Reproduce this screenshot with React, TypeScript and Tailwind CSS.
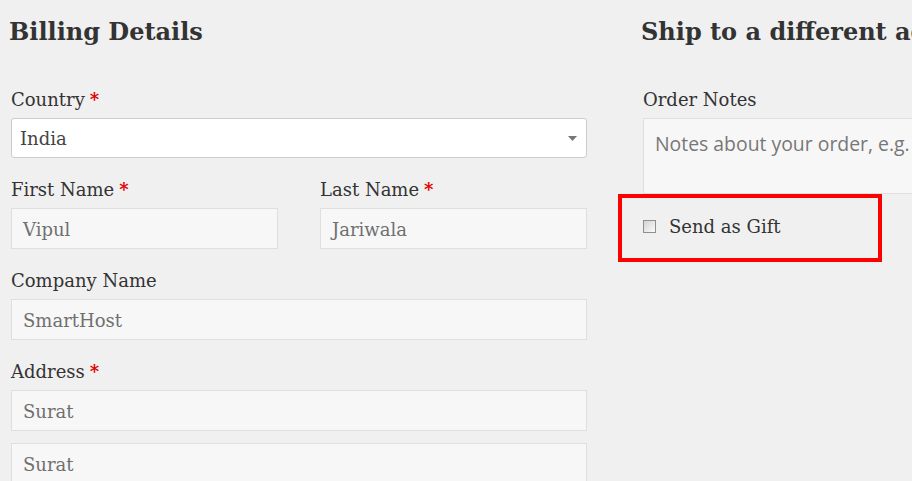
import React from 'react';

const serif = { fontFamily: '"DejaVu Serif", "Liberation Serif", serif' };

const Req = () => <span className="ml-[5px] font-bold text-[#e00000]">*</span>;

const Label = ({ text, req }: { text: string; req?: boolean }) => (
  <div className="h-[30px] leading-[30px] mb-[3px] text-[18px] text-[#333]">
    {text}
    {req && <Req />}
  </div>
);

const Field = ({ value }: { value: string }) => (
  <div className="h-[41px] flex items-center pt-[2px] px-[11px] bg-[#f7f7f7] border border-[#dfdfdf] text-[18px] text-[#6f6f6f]">
    {value}
  </div>
);

const App = () => {
  return (
    <div className="w-[912px] h-[481px] overflow-hidden bg-[#f0f0f0]" style={serif}>
      <div className="flex gap-[56px] pl-[11px] w-[1300px]">
        {/* Billing Details */}
        <div className="w-[576px] shrink-0">
          <h2 className="pt-[16px] h-[48px] leading-[32px] text-[24px] font-bold text-[#333] -ml-[2px]">
            Billing Details
          </h2>

          <div className="mt-[37px]">
            <Label text="Country" req />
            <div className="h-[40px] flex items-center justify-between pl-[8px] pr-[9px] bg-white border border-[#cccccc] rounded-[3px] text-[18px] text-[#444]">
              <span>India</span>
              <svg width="9" height="5" viewBox="0 0 9 5">
                <path d="M0 0 L9 0 L4.5 5 Z" fill="#777" />
              </svg>
            </div>
          </div>

          <div className="mt-[17px] grid grid-cols-2 gap-[42px]">
            <div>
              <Label text="First Name" req />
              <Field value="Vipul" />
            </div>
            <div>
              <Label text="Last Name" req />
              <Field value="Jariwala" />
            </div>
          </div>

          <div className="mt-[17px]">
            <Label text="Company Name" />
            <Field value="SmartHost" />
          </div>

          <div className="mt-[17px]">
            <Label text="Address" req />
            <Field value="Surat" />
            <div className="mt-[12px]">
              <Field value="Surat" />
            </div>
          </div>
        </div>

        {/* Shipping / notes */}
        <div className="w-[576px] shrink-0">
          <h2 className="pt-[16px] h-[48px] leading-[32px] text-[24px] font-bold text-[#333] -ml-[2px] whitespace-nowrap">
            Ship to a different address?
          </h2>

          <div className="mt-[37px]">
            <Label text="Order Notes" />
            <div
              className="h-[76px] pt-[11px] px-[11px] bg-[#f7f7f7] border border-[#dfdfdf] text-[19.4px] leading-[28px] text-[#777] whitespace-nowrap"
              style={{ fontFamily: '"Open Sans", sans-serif' }}
            >
              Notes about your order, e.g. special notes for delivery.
            </div>
          </div>

          <div className="-ml-[25px] w-[264px] h-[68px] border-4 border-[#ff0000] flex items-center pl-[21px] pb-[3px]">
            <span className="w-[13px] h-[13px] border border-[#8e8f8f] bg-gradient-to-br from-[#d4d4d4] to-[#fafafa]" />
            <span className="ml-[13px] text-[18px] text-[#333]">Send as Gift</span>
          </div>
        </div>
      </div>
    </div>
  );
};

export default App;
